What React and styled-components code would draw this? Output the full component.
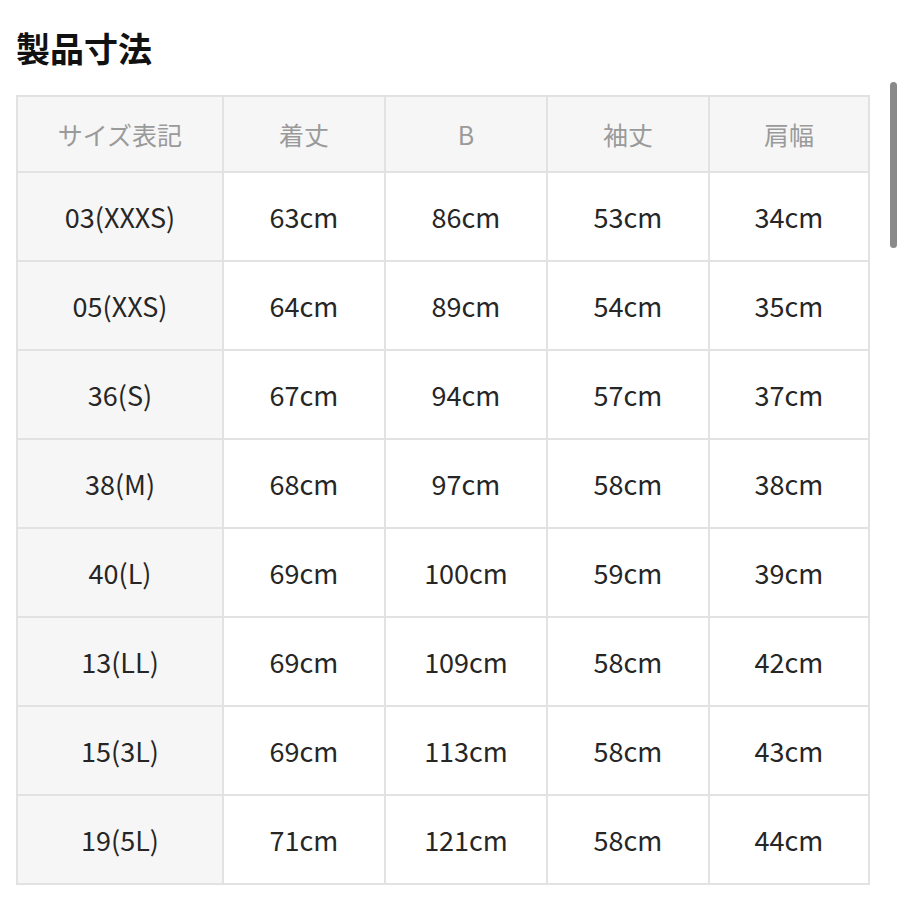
import React from "react";
import styled, {createGlobalStyle} from "styled-components";

const Global = createGlobalStyle`
  html, body {
    margin: 0;
    background: #fff;
    font-family: "Noto Sans CJK JP", "Noto Sans", sans-serif;
    color: #222;
  }
`

const Page = styled.div`
  position: relative;
  width: 900px;
  height: 900px;
  padding: 23px 0 0 16px;
  box-sizing: border-box;
  overflow: hidden;
`

const Title = styled.h2`
  margin: 0 0 22px;
  font-size: 34px;
  font-weight: 700;
  line-height: 50px;
  color: #111;
`

const Table = styled.table`
  border-collapse: collapse;
  table-layout: fixed;
  width: 852px;
`

const Cell = styled.td`
  border: 2px solid #e2e2e2;
  text-align: center;
  vertical-align: middle;
  height: ${p => p.$head ? 74 : 87}px;
  padding: 0;
  font-size: ${p => p.$head ? 25 : 27}px;
  color: ${p => p.$head ? "#9a9a9a" : "#262626"};
  background: ${p => p.$side || p.$head ? "#f6f6f6" : "#fff"};
`

const Scrollbar = styled.div`
  position: absolute;
  right: 3px;
  top: 82px;
  width: 7px;
  height: 166px;
  border-radius: 4px;
  background: #8a8a8a;
`

const head = ["サイズ表記", "着丈", "B", "袖丈", "肩幅"]
const rows = [
    ["03(XXXS)", 63, 86, 53, 34],
    ["05(XXS)", 64, 89, 54, 35],
    ["36(S)", 67, 94, 57, 37],
    ["38(M)", 68, 97, 58, 38],
    ["40(L)", 69, 100, 59, 39],
    ["13(LL)", 69, 109, 58, 42],
    ["15(3L)", 69, 113, 58, 43],
    ["19(5L)", 71, 121, 58, 44],
]
const widths = [206, 162, 162, 162, 160]

const App = () => {
    return (<Page>
        <Global/>
        <Title>製品寸法</Title>
        <Table>
            <colgroup>
                {widths.map((w, i) => <col key={i} style={{width: w}}/>)}
            </colgroup>
            <tbody>
            <tr>
                {head.map(h => <Cell key={h} $head>{h}</Cell>)}
            </tr>
            {rows.map(r => (
                <tr key={r[0]}>
                    <Cell $side>{r[0]}</Cell>
                    {r.slice(1).map((v, i) => <Cell key={i}>{v}cm</Cell>)}
                </tr>
            ))}
            </tbody>
        </Table>
        <Scrollbar/>
    </Page>)
}

export default App
